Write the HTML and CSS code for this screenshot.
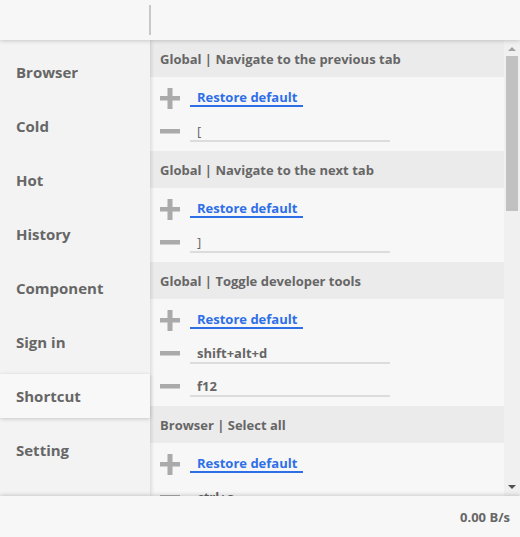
FILE: index.html
```html
<!DOCTYPE html>
<html>
<head>
<meta charset="utf-8">
<link rel="stylesheet" href="styles.css">
</head>
<body>
<div class="app">
  <header class="topbar"><div class="topbar-sep"></div></header>
  <div class="main">
    <nav class="sidebar">
      <div class="nav-item">Browser</div>
      <div class="nav-item">Cold</div>
      <div class="nav-item">Hot</div>
      <div class="nav-item">History</div>
      <div class="nav-item">Component</div>
      <div class="nav-item">Sign in</div>
      <div class="nav-item active">Shortcut</div>
      <div class="nav-item">Setting</div>
    </nav>
    <section class="content">
      <div class="list">
        <div class="group">
          <div class="group-title">Global | Navigate to the previous tab</div>
          <div class="group-body">
            <div class="row">
              <svg class="icon" width="20" height="21" viewBox="0 0 20 21"><rect x="0" y="8" width="20" height="4.5" fill="#aaa"/><rect x="7.5" y="0" width="5" height="21" fill="#aaa"/></svg>
              <a class="restore">Restore default</a>
            </div>
            <div class="row">
              <svg class="icon" width="20" height="5" viewBox="0 0 20 5"><rect x="0" y="0" width="20" height="4.5" fill="#aaa"/></svg>
              <div class="key thin">[</div>
            </div>
          </div>
        </div>
        <div class="group">
          <div class="group-title">Global | Navigate to the next tab</div>
          <div class="group-body">
            <div class="row">
              <svg class="icon" width="20" height="21" viewBox="0 0 20 21"><rect x="0" y="8" width="20" height="4.5" fill="#aaa"/><rect x="7.5" y="0" width="5" height="21" fill="#aaa"/></svg>
              <a class="restore">Restore default</a>
            </div>
            <div class="row">
              <svg class="icon" width="20" height="5" viewBox="0 0 20 5"><rect x="0" y="0" width="20" height="4.5" fill="#aaa"/></svg>
              <div class="key thin">]</div>
            </div>
          </div>
        </div>
        <div class="group">
          <div class="group-title">Global | Toggle developer tools</div>
          <div class="group-body">
            <div class="row">
              <svg class="icon" width="20" height="21" viewBox="0 0 20 21"><rect x="0" y="8" width="20" height="4.5" fill="#aaa"/><rect x="7.5" y="0" width="5" height="21" fill="#aaa"/></svg>
              <a class="restore">Restore default</a>
            </div>
            <div class="row">
              <svg class="icon" width="20" height="5" viewBox="0 0 20 5"><rect x="0" y="0" width="20" height="4.5" fill="#aaa"/></svg>
              <div class="key">shift+alt+d</div>
            </div>
            <div class="row">
              <svg class="icon" width="20" height="5" viewBox="0 0 20 5"><rect x="0" y="0" width="20" height="4.5" fill="#aaa"/></svg>
              <div class="key">f12</div>
            </div>
          </div>
        </div>
        <div class="group">
          <div class="group-title">Browser | Select all</div>
          <div class="group-body">
            <div class="row">
              <svg class="icon" width="20" height="21" viewBox="0 0 20 21"><rect x="0" y="8" width="20" height="4.5" fill="#aaa"/><rect x="7.5" y="0" width="5" height="21" fill="#aaa"/></svg>
              <a class="restore">Restore default</a>
            </div>
            <div class="row">
              <svg class="icon" width="20" height="5" viewBox="0 0 20 5"><rect x="0" y="0" width="20" height="4.5" fill="#aaa"/></svg>
              <div class="key">ctrl+a</div>
            </div>
          </div>
        </div>
      </div>
      <div class="scrollbar">
        <div class="sb-arrow up"></div>
        <div class="sb-track"><div class="sb-thumb"></div></div>
        <div class="sb-arrow down"></div>
      </div>
    </section>
  </div>
  <footer class="bottombar">0.00 B/s</footer>
</div>
</body>
</html>
```

FILE: styles.css
```css
* { box-sizing: border-box; }
html, body { margin: 0; padding: 0; }
body {
  width: 520px;
  height: 537px;
  overflow: hidden;
  background: #f7f7f7;
  font-family: "Open Sans", "Noto Sans", sans-serif;
  font-weight: 700;
  color: #666;
}
.app {
  display: flex;
  flex-direction: column;
  height: 537px;
}
.topbar {
  height: 40px;
  flex: none;
  background: #f7f7f7;
  position: relative;
  z-index: 3;
  box-shadow: 0 1px 4px rgba(0,0,0,0.18);
  padding: 5px 0 0 149px;
}
.topbar-sep {
  width: 2px;
  height: 30px;
  background: #c8c8c8;
}
.main {
  flex: 1;
  display: flex;
  min-height: 0;
  position: relative;
  z-index: 1;
}
.sidebar {
  width: 150px;
  flex: none;
  background: #f3f3f3;
  padding-top: 10px;
  display: flex;
  flex-direction: column;
  gap: 10px;
  position: relative;
  z-index: 2;
  box-shadow: 1px 0 4px rgba(0,0,0,0.15);
}
.nav-item {
  height: 44px;
  line-height: 44px;
  padding-left: 16px;
  font-size: 15px;
  color: #666;
}
.nav-item.active {
  background: #f8f8f8;
  box-shadow: 0 1px 4px rgba(0,0,0,0.18);
}
.content {
  flex: 1;
  display: flex;
  min-width: 0;
  overflow: hidden;
}
.list {
  flex: 1;
  min-width: 0;
}
.group-title {
  height: 37px;
  padding: 2px 0 0 10px;
  line-height: 35px;
  background: #ebebeb;
  font-size: 13px;
  color: #666;
}
.group-body {
  background: #f7f7f7;
  padding: 5px 0 3px 10px;
}
.row {
  height: 33px;
  display: flex;
  align-items: center;
  gap: 10px;
}
.icon { flex: none; display: block; }
.restore {
  display: block;
  height: 21px;
  padding: 4px 6px 0 7px;
  margin-bottom: 5px;
  line-height: 15px;
  font-size: 13px;
  color: #2e6fe8;
  border-bottom: 2px solid #2e6fe8;
}
.key {
  width: 200px;
  height: 24px;
  padding: 4px 0 0 7px;
  margin-bottom: 3px;
  line-height: 18px;
  font-size: 13px;
  color: #666;
  border-bottom: 2px solid #dcdcdc;
}
.key.thin { font-weight: 400; }
.scrollbar {
  width: 16px;
  flex: none;
  background: #f0f0f0;
  display: flex;
  flex-direction: column;
  align-items: center;
}
.sb-arrow {
  height: 16px;
  width: 16px;
  position: relative;
}
.sb-arrow::after {
  content: "";
  position: absolute;
  left: 4px;
  width: 0;
  height: 0;
  border-left: 4px solid transparent;
  border-right: 4px solid transparent;
}
.sb-arrow.up::after { top: 7px; border-bottom: 4px solid #a3a3a3; }
.sb-arrow.down::after { top: 5px; border-top: 4px solid #505050; }
.sb-track {
  flex: 1;
  width: 12px;
}
.sb-thumb {
  height: 155px;
  background: #c1c1c1;
}
.bottombar {
  height: 41px;
  flex: none;
  background: #f7f7f7;
  position: relative;
  z-index: 3;
  box-shadow: 0 -1px 4px rgba(0,0,0,0.18);
  text-align: right;
  padding-right: 10px;
  line-height: 42px;
  font-size: 13px;
  color: #666;
}
```
